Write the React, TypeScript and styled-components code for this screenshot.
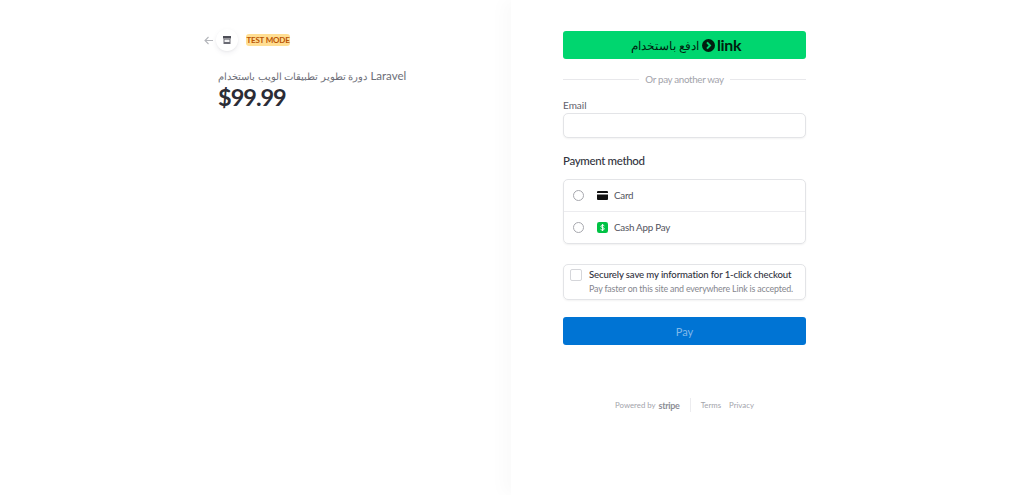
import React from "react";
import styled, { createGlobalStyle } from "styled-components";

const GlobalStyle = createGlobalStyle`
  html, body {
    margin: 0;
    padding: 0;
    background: #fff;
  }
  * {
    box-sizing: border-box;
  }
  body {
    font-family: Lato, "Noto Sans", "Liberation Sans", sans-serif;
    color: #30313d;
    overflow: hidden;
  }
`;

const Page = styled.div`
  display: grid;
  grid-template-columns: 511px 513px;
  height: 495px;
`;

const Summary = styled.section`
  padding: 31px 0 0 204px;
`;

const SummaryHeader = styled.header`
  display: flex;
  align-items: center;
  height: 18px;
`;

const BackArrow = styled.svg`
  width: 9px;
  height: 9px;
  color: #b4b6bb;
`;

const StoreBubble = styled.div`
  display: flex;
  align-items: center;
  justify-content: center;
  width: 22px;
  height: 22px;
  margin-left: 3px;
  border-radius: 50%;
  background: #fff;
  box-shadow: 0 2px 5px rgba(50, 50, 93, 0.08), 0 1px 2px rgba(0, 0, 0, 0.04);
`;

const TestBadge = styled.span`
  display: block;
  width: 44px;
  height: 12px;
  margin-left: 8px;
  border-radius: 3px;
  background: #ffde92;
  color: #bb5504;
  font-size: 8px;
  line-height: 12px;
  font-weight: 700;
  letter-spacing: -0.2px;
  text-align: center;
  white-space: nowrap;
`;

const ProductInfo = styled.div`
  margin: 19px 0 0 14px;
`;

const ProductName = styled.div`
  font-size: 11.5px;
  line-height: 16px;
  color: #6d6e78;
  white-space: nowrap;
`;

const ArabicRun = styled.span`
  font-size: 10.2px;
`;

const Price = styled.div`
  margin-top: -1px;
  font-size: 23.5px;
  line-height: 29px;
  font-weight: 700;
  letter-spacing: -1px;
  color: #2b2c36;
`;

const Checkout = styled.section`
  padding: 31px 0 0 52px;
  box-shadow: -8px 0 16px rgba(0, 0, 0, 0.022);
`;

const Column = styled.div`
  width: 243px;
`;

const LinkButton = styled.button`
  display: flex;
  align-items: center;
  justify-content: center;
  width: 100%;
  height: 28px;
  padding: 0 0 0 3px;
  border: 0;
  border-radius: 3px;
  background: #00d66f;
  color: #011e0f;
  font-family: inherit;
  font-size: 12px;
`;

const LinkLogoText = styled.span`
  font-size: 16px;
  line-height: 20px;
  font-weight: 700;
  letter-spacing: -0.4px;
`;

const LinkMark = styled.svg`
  width: 13px;
  height: 13px;
  margin: 0 2px 0 3px;
`;

const Divider = styled.div`
  display: flex;
  align-items: center;
  gap: 6px;
  margin-top: 12px;
  height: 16px;
  font-size: 9.8px;
  letter-spacing: -0.33px;
  color: #a3a4ab;
  white-space: nowrap;

  &::before,
  &::after {
    content: "";
    flex: 1;
    height: 1px;
    background: #e8e8eb;
  }
`;

const FieldLabel = styled.label`
  display: block;
  margin-top: 11px;
  font-size: 10px;
  line-height: 14px;
  color: #5f606a;
`;

const EmailInput = styled.input`
  display: block;
  width: 100%;
  height: 25px;
  margin-top: 1px;
  border: 1px solid #e3e4e7;
  border-radius: 5px;
  background: #fff;
  box-shadow: 0 1px 2px rgba(0, 0, 0, 0.05);
`;

const SectionTitle = styled.h2`
  margin: 15px 0 0;
  font-size: 11.5px;
  line-height: 16px;
  font-weight: 500;
  letter-spacing: -0.35px;
  color: #33343e;
`;

const MethodList = styled.div`
  margin-top: 10px;
  height: 65px;
  border: 1px solid #e3e4e7;
  border-radius: 5px;
  box-shadow: 0 1px 2px rgba(0, 0, 0, 0.06);
`;

const MethodRow = styled.div`
  display: flex;
  align-items: center;
  height: 31px;
  padding-left: 9px;
  font-size: 9.8px;
  letter-spacing: -0.25px;
  color: #53545e;

  & + & {
    height: 32px;
    border-top: 1px solid #ececef;
  }
`;

const MethodLabel = styled.span`
  margin-bottom: 2px;
`;

const Radio = styled.span`
  width: 11px;
  height: 11px;
  border: 1px solid #a7a8ae;
  border-radius: 50%;
  background: #fff;
`;

const MethodIcon = styled.svg`
  width: 11px;
  height: 11px;
  margin: 0 6px 0 13px;
`;

const SavePanel = styled.div`
  display: flex;
  margin-top: 20px;
  height: 36px;
  padding: 4px 6px;
  border: 1px solid #e3e4e7;
  border-radius: 5px;
  box-shadow: 0 1px 2px rgba(0, 0, 0, 0.05);
`;

const Checkbox = styled.span`
  flex: none;
  width: 12px;
  height: 12px;
  border: 1px solid #d5d6da;
  border-radius: 2px;
  background: #fff;
`;

const SaveText = styled.div`
  margin-left: 7px;
  white-space: nowrap;
`;

const SaveTitle = styled.div`
  font-size: 9.6px;
  line-height: 12px;
  font-weight: 500;
  letter-spacing: -0.14px;
  color: #30313d;
`;

const SaveHint = styled.div`
  margin-top: 2px;
  font-size: 8.9px;
  line-height: 12px;
  letter-spacing: -0.18px;
  color: #85868e;
`;

const PayButton = styled.button`
  display: block;
  width: 100%;
  height: 28px;
  margin-top: 17px;
  padding: 0;
  border: 0;
  border-radius: 3px;
  background: #0074d4;
  color: #80b9ea;
  font-family: inherit;
  font-size: 11px;
`;

const Footer = styled.footer`
  display: flex;
  align-items: center;
  justify-content: center;
  height: 14px;
  margin-top: 53px;
  font-size: 7.8px;
  color: #a3a4ab;
  white-space: nowrap;
`;

const StripeWord = styled.b`
  margin-left: 3px;
  font-size: 9px;
  letter-spacing: -0.3px;
  color: #8d8e96;
`;

const FooterRule = styled.span`
  width: 1px;
  height: 14px;
  margin: 0 10px;
  background: #ececef;
`;

const FooterLink = styled.span`
  & + & {
    margin-left: 8px;
  }
`;

export default function App() {
  return (
    <>
      <GlobalStyle />
      <Page>
        <Summary>
          <SummaryHeader>
            <BackArrow viewBox="0 0 9 9" fill="none" stroke="currentColor" strokeWidth="1.1">
              <path d="M9 4.5H1M4.5 1L1 4.5 4.5 8" />
            </BackArrow>
            <StoreBubble>
              <svg width="8" height="8" viewBox="0 0 8 8">
                <path d="M0 0h8v2.6H0z" fill="#4d4e57" />
                <path d="M.5 3h7v5h-7z" fill="#6a6b74" />
                <path d="M1.5 3.6h5V6h-5z" fill="#f2f2f3" />
              </svg>
            </StoreBubble>
            <TestBadge>TEST MODE</TestBadge>
          </SummaryHeader>
          <ProductInfo>
            <ProductName>
              <ArabicRun>دورة تطوير تطبيقات الويب باستخدام</ArabicRun> Laravel
            </ProductName>
            <Price>$99.99</Price>
          </ProductInfo>
        </Summary>
        <Checkout>
          <Column>
            <LinkButton type="button">
              <span>ادفع باستخدام</span>
              <LinkMark viewBox="0 0 13 13">
                <circle cx="6.5" cy="6.5" r="6.5" fill="#011e0f" />
                <path d="M5 3.4L8 6.5 5 9.6" fill="none" stroke="#00d66f" strokeWidth="2" />
              </LinkMark>
              <LinkLogoText>link</LinkLogoText>
            </LinkButton>
            <Divider>Or pay another way</Divider>
            <FieldLabel>Email</FieldLabel>
            <EmailInput type="text" />
            <SectionTitle>Payment method</SectionTitle>
            <MethodList>
              <MethodRow>
                <Radio />
                <MethodIcon viewBox="0 0 11 11">
                  <path d="M0 2A1 1 0 0 1 1 1h9a1 1 0 0 1 1 1v1H0z" fill="#111" />
                  <path d="M0 4.4h11V9a1 1 0 0 1-1 1H1a1 1 0 0 1-1-1z" fill="#111" />
                </MethodIcon>
                <MethodLabel>Card</MethodLabel>
              </MethodRow>
              <MethodRow>
                <Radio />
                <MethodIcon viewBox="0 0 11 11">
                  <rect width="11" height="11" rx="2.2" fill="#00c244" />
                  <path
                    d="M7.3 3.9c-.5-.5-1.1-.7-1.8-.7-.9 0-1.6.4-1.6 1.2 0 1.5 3.3.8 3.3 2.3 0 .8-.8 1.3-1.7 1.3-.8 0-1.5-.3-2-.8M5.6 2v7"
                    fill="none"
                    stroke="#fff"
                    strokeWidth="1"
                  />
                </MethodIcon>
                <MethodLabel>Cash App Pay</MethodLabel>
              </MethodRow>
            </MethodList>
            <SavePanel>
              <Checkbox />
              <SaveText>
                <SaveTitle>Securely save my information for 1-click checkout</SaveTitle>
                <SaveHint>Pay faster on this site and everywhere Link is accepted.</SaveHint>
              </SaveText>
            </SavePanel>
            <PayButton type="button">Pay</PayButton>
            <Footer>
              Powered by <StripeWord>stripe</StripeWord>
              <FooterRule />
              <FooterLink>Terms</FooterLink>
              <FooterLink>Privacy</FooterLink>
            </Footer>
          </Column>
        </Checkout>
      </Page>
    </>
  );
}
